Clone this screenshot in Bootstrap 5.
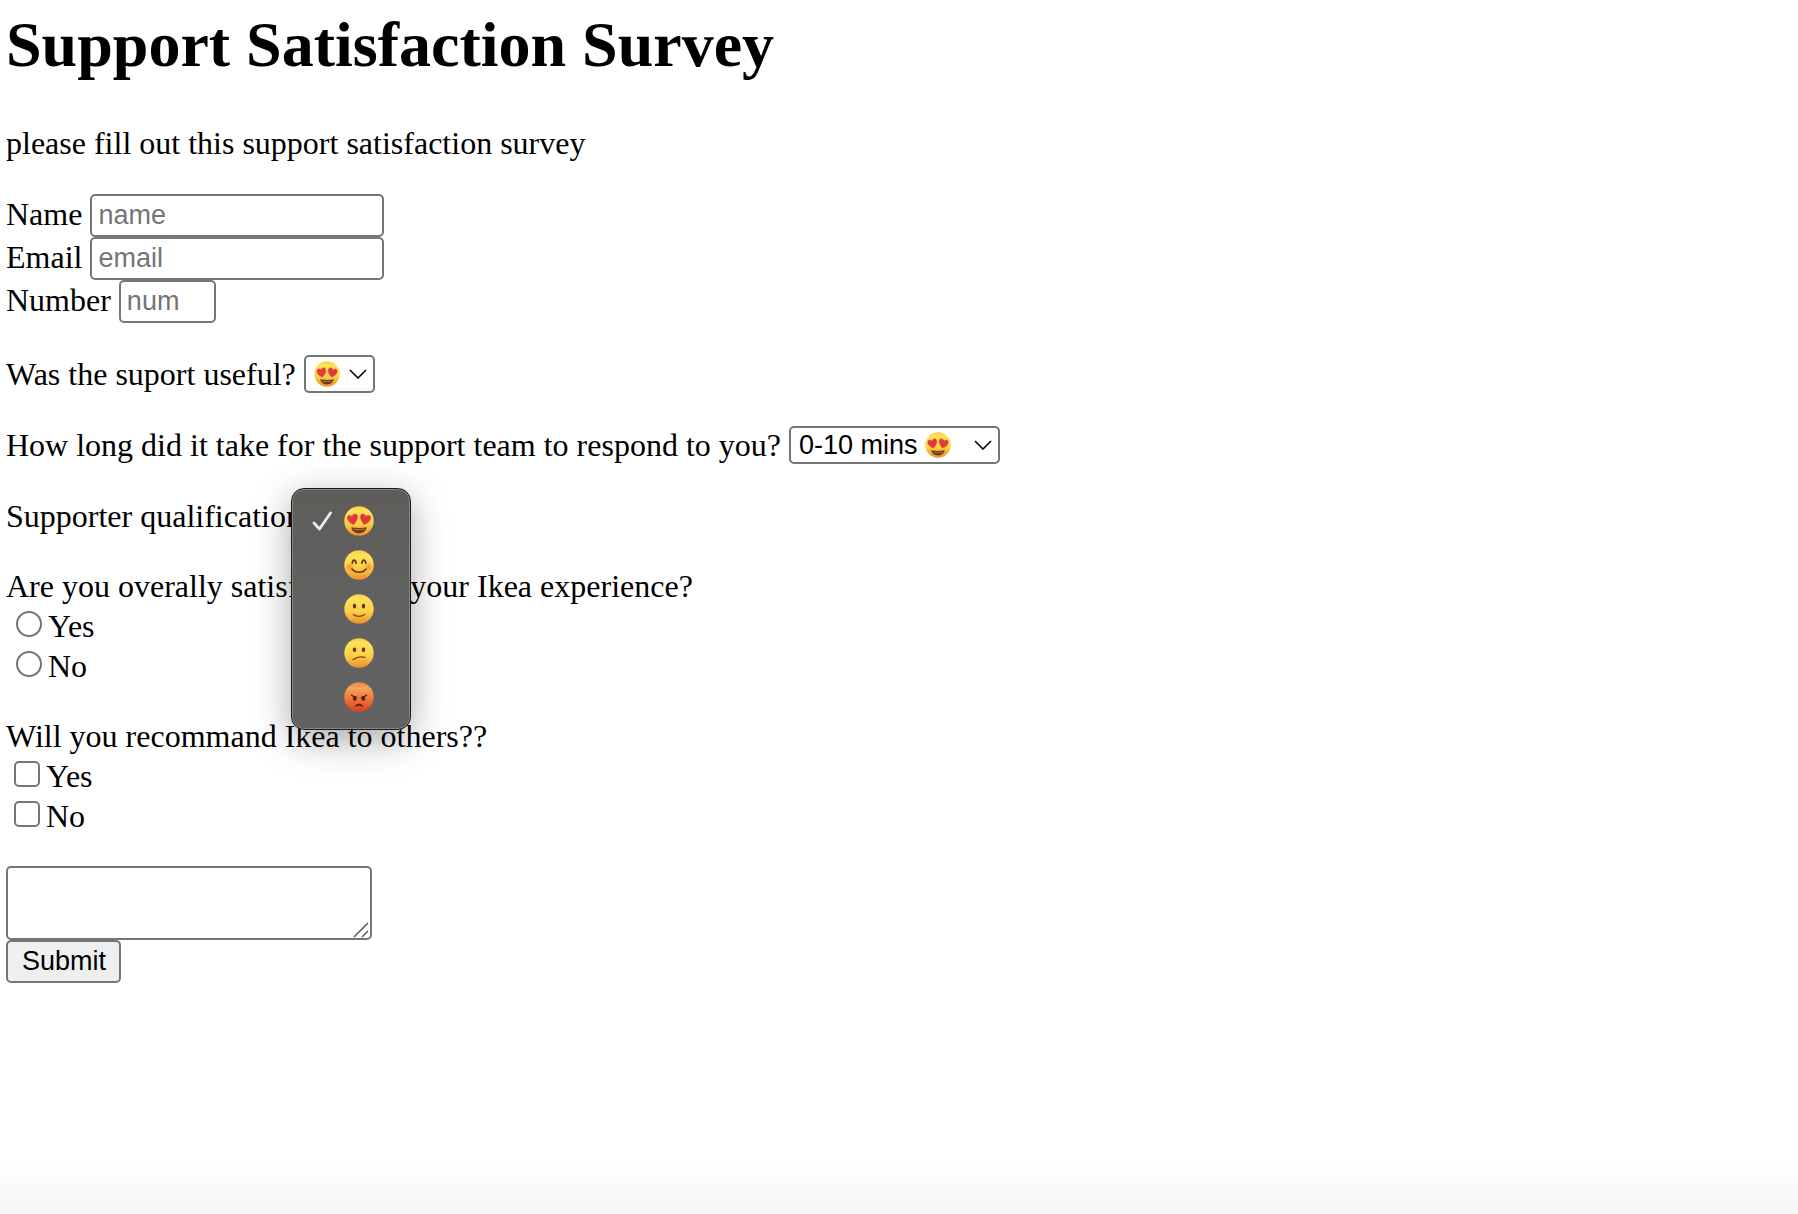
<!DOCTYPE html>
<html lang="en">
<head>
<meta charset="utf-8">
<meta name="viewport" content="width=device-width, initial-scale=1">
<title>Support Satisfaction Survey</title>
<link rel="stylesheet" href="https://cdn.jsdelivr.net/npm/bootstrap@5.3.0/dist/css/bootstrap.min.css">
<script src="https://cdn.jsdelivr.net/npm/bootstrap@5.3.0/dist/js/bootstrap.bundle.min.js"></script>
<style>
  body {
    font-family: "Liberation Serif", "Times New Roman", serif;
    font-size: 32px;
    line-height: 40px;
    color: #000;
    background: linear-gradient(to top, #f5f5f5, #fff 52px) no-repeat;
  }
  .survey { padding: 8px 6px; }
  .survey-title { font-size: 64px; line-height: 74px; font-weight: 700; margin-bottom: 41px; }
  .survey-intro { margin-bottom: 31px; }
  .survey-form { gap: 30px; }
  .entry { height: 43px; }
  .question { gap: 8px; min-height: 41px; }
  .question-title { font-size: 32px; line-height: 40px; float: none; margin: 0; }

  .field, .picker, .comment, .send {
    font-family: "Liberation Sans", Arial, sans-serif;
    font-size: 27px;
    border: 2px solid #767676;
    border-radius: 5px;
    background-color: #fff;
    color: #000;
  }
  .field { width: 294px; height: 43px; padding: 2px 6px; line-height: 35px; }
  .field-short { width: 97px; }
  .field::placeholder { color: #757575; opacity: 1; }
  .picker {
    appearance: none;
    height: 38px;
    width: 71px;
    padding: 0 8px;
    line-height: 34px;
    background: #fff url("data:image/svg+xml,%3Csvg xmlns='http://www.w3.org/2000/svg' viewBox='0 0 18 10'%3E%3Cpath d='M1 1l8 8 8-8' fill='none' stroke='%23000' stroke-width='1.6'/%3E%3C/svg%3E") no-repeat right 6px center / 18px 10px;
  }
  .picker-wide { width: 211px; }
  .picker-face { width: 26px; height: 26px; left: 10px; top: 6px; pointer-events: none; }
  .picker-wide + .picker-face { left: 136px; }

  .choice { height: 40px; }
  .tick {
    appearance: none;
    width: 26px;
    height: 26px;
    margin: 5px 6px 0 8px;
    border: 2px solid #767676;
    border-radius: 5px;
    background: #fff;
  }
  .tick[type="radio"] { border-radius: 50%; margin-left: 10px; }

  .comment { width: 366px; height: 74px; padding: 4px; resize: none; }
  .grip { width: 16px; height: 16px; right: 3px; bottom: 2px; pointer-events: none; }
  .send { height: 43px; padding: 0 13px 0 14px; line-height: 39px; background: #efefef; }

  .faces {
    top: -9px;
    left: -19px;
    width: 120px;
    height: 242px;
    padding: 10px 0;
    z-index: 5;
    border: 1px solid #1c1c1c;
    border-radius: 13px;
    background: linear-gradient(#5e5d5a, #626262 60%);
    box-shadow: inset 0 0 0 1px #858585, 0 10px 36px rgba(0, 0, 0, .34);
  }
  .faces li { height: 44px; padding-left: 20px; gap: 12px; }
  .faces svg { width: 30px; height: 30px; }
  .faces .check { width: 20px; height: 20px; }
</style>
</head>
<body class="min-vh-100">

<svg width="0" height="0" class="position-absolute" aria-hidden="true">
  <defs>
    <linearGradient id="gold" x1="0" y1="0" x2="0" y2="1">
      <stop offset="0" stop-color="#fbc93a"/><stop offset=".15" stop-color="#ffe25c"/><stop offset=".6" stop-color="#fdcf48"/><stop offset="1" stop-color="#e8912a"/>
    </linearGradient>
    <linearGradient id="rage" x1="0" y1="0" x2="0" y2="1">
      <stop offset="0" stop-color="#eb8440"/><stop offset=".2" stop-color="#f3a557"/><stop offset=".6" stop-color="#ee7038"/><stop offset="1" stop-color="#dc3f20"/>
    </linearGradient>
    <radialGradient id="blush"><stop offset="0" stop-color="#f77a30" stop-opacity=".75"/><stop offset="1" stop-color="#f77a30" stop-opacity="0"/></radialGradient>
  </defs>
  <symbol id="face-love" viewBox="0 0 30 30">
    <circle cx="15" cy="15" r="14.7" fill="url(#gold)"/>
    <path d="M9.600 18.600C6.500 17.400 3.300 15 3.200 11.600c0-2.500 3.200-3.400 4.700-.9 .5-2.900 4.300-3.900 5.400-1.300 1.200 3-1.300 6.800-3.700 9.200z" fill="#e5383c" stroke="#c9432b" stroke-width=".4"/>
    <path d="M20.400 18.600c3.100-1.200 6.300-3.600 6.400-7 0-2.500-3.200-3.400-4.700-.9-.5-2.900-4.300-3.900-5.400-1.300-1.200 3 1.300 6.800 3.700 9.200z" fill="#e5383c" stroke="#c9432b" stroke-width=".4"/>
    <path d="M7.300 21.200c4.800 1.100 10.600 1.100 15.400 0-.5 3.700-3.800 6-7.700 6s-7.200-2.300-7.700-6z" fill="#703a12"/>
    <path d="M9 22.400c4 .8 8 .8 12 0-.4 1.100-1.600 1.500-6 1.500s-5.600-.4-6-1.500z" fill="#b48247"/>
  </symbol>
  <symbol id="face-happy" viewBox="0 0 30 30">
    <circle cx="15" cy="15" r="14.7" fill="url(#gold)"/>
    <circle cx="5.500" cy="17" r="5" fill="url(#blush)"/><circle cx="24.500" cy="17" r="5" fill="url(#blush)"/>
    <g fill="none" stroke="#67350f" stroke-linecap="round">
      <path d="M8.300 13.200c.4-4 3.200-4 3.800 0M17.900 13.200c.5-4 3.300-4 3.800 0" stroke-width="1.700"/>
      <path d="M8 19c3.400 4.400 10.600 4.400 14 0" stroke-width="1.500"/>
    </g>
  </symbol>
  <symbol id="face-smile" viewBox="0 0 30 30">
    <circle cx="15" cy="15" r="14.700" fill="url(#gold)"/>
    <ellipse cx="10.500" cy="12" rx="1.700" ry="2.600" fill="#67350f"/><ellipse cx="19.500" cy="12" rx="1.700" ry="2.600" fill="#67350f"/>
    <path d="M9.200 20.300c3.200 2.800 8.400 2.800 11.600 0" fill="none" stroke="#7d4511" stroke-width="1.200" stroke-linecap="round"/>
  </symbol>
  <symbol id="face-unsure" viewBox="0 0 30 30">
    <circle cx="15" cy="15" r="14.700" fill="url(#gold)"/>
    <ellipse cx="10.500" cy="11.700" rx="1.800" ry="2.300" fill="#67350f"/><ellipse cx="19.500" cy="11.700" rx="1.800" ry="2.300" fill="#67350f"/>
    <path d="M9 21.700c3-2.500 7.600-3.400 12-2.300" fill="none" stroke="#7d4511" stroke-width="1.200" stroke-linecap="round"/>
  </symbol>
  <symbol id="face-angry" viewBox="0 0 30 30">
    <circle cx="15" cy="15" r="14.700" fill="url(#rage)"/>
    <ellipse cx="10.700" cy="16.600" rx="1.900" ry="2.400" fill="#591d0b"/><ellipse cx="19.300" cy="16.600" rx="1.900" ry="2.400" fill="#591d0b"/>
    <path d="M7.600 13.300c1.200 1.200 2.800 1.900 5 2.100M22.400 13.300c-1.200 1.200-2.800 1.900-5 2.100" fill="none" stroke="#591d0b" stroke-width="1.300" stroke-linecap="round"/>
    <path d="M11.200 24.200c1.400-2.600 6.200-2.600 7.600 0-2-1-5.600-1-7.600 0z" fill="#591d0b" stroke="#591d0b" stroke-width=".8"/>
  </symbol>
</svg>

<main class="survey">
  <h1 class="survey-title">Support Satisfaction Survey</h1>
  <p class="survey-intro">please fill out this support satisfaction survey</p>

  <form class="survey-form d-flex flex-column">
    <div>
      <div class="entry d-flex align-items-start gap-2">
        <label for="name">Name</label>
        <input class="field" id="name" type="text" placeholder="name">
      </div>
      <div class="entry d-flex align-items-start gap-2">
        <label for="email">Email</label>
        <input class="field" id="email" type="email" placeholder="email">
      </div>
      <div class="entry d-flex align-items-start gap-2">
        <label for="number">Number</label>
        <input class="field field-short" id="number" type="text" inputmode="numeric" placeholder="num">
      </div>
    </div>

    <div class="question d-flex align-items-center">
      <label for="useful">Was the suport useful?</label>
      <span class="position-relative d-flex">
        <select class="picker" id="useful"><option aria-label="Loved it"></option></select>
        <svg class="picker-face position-absolute"><use href="#face-love"/></svg>
      </span>
    </div>

    <div class="question d-flex align-items-center">
      <label for="wait">How long did it take for the support team to respond to you?</label>
      <span class="position-relative d-flex">
        <select class="picker picker-wide" id="wait"><option>0-10 mins</option></select>
        <svg class="picker-face position-absolute"><use href="#face-love"/></svg>
      </span>
    </div>

    <div class="question d-flex align-items-center">
      <label for="skill">Supporter qualification</label>
      <span class="position-relative d-flex">
        <select class="picker" id="skill"><option aria-label="Loved it"></option></select>
        <ul class="faces position-absolute list-unstyled m-0">
          <li class="d-flex align-items-center">
            <svg class="check" viewBox="0 0 20 20"><path d="M2 12l5.500 6L18.500 2" fill="none" stroke="#ececec" stroke-width="2.800" stroke-linecap="round" stroke-linejoin="round"/></svg>
            <svg><use href="#face-love"/></svg>
          </li>
          <li class="d-flex align-items-center"><span class="check"></span><svg><use href="#face-happy"/></svg></li>
          <li class="d-flex align-items-center"><span class="check"></span><svg><use href="#face-smile"/></svg></li>
          <li class="d-flex align-items-center"><span class="check"></span><svg><use href="#face-unsure"/></svg></li>
          <li class="d-flex align-items-center"><span class="check"></span><svg><use href="#face-angry"/></svg></li>
        </ul>
      </span>
    </div>

    <fieldset>
      <legend class="question-title">Are you overally satisfied with your Ikea experience?</legend>
      <div class="choice d-flex align-items-start">
        <input class="tick" type="radio" name="satisfied" id="satisfied-yes"><label for="satisfied-yes">Yes</label>
      </div>
      <div class="choice d-flex align-items-start">
        <input class="tick" type="radio" name="satisfied" id="satisfied-no"><label for="satisfied-no">No</label>
      </div>
    </fieldset>

    <fieldset>
      <legend class="question-title">Will you recommand Ikea to others??</legend>
      <div class="choice d-flex align-items-start">
        <input class="tick" type="checkbox" id="recommend-yes"><label for="recommend-yes">Yes</label>
      </div>
      <div class="choice d-flex align-items-start">
        <input class="tick" type="checkbox" id="recommend-no"><label for="recommend-no">No</label>
      </div>
    </fieldset>

    <div class="d-flex flex-column align-items-start">
      <div class="position-relative d-flex">
        <textarea class="comment" aria-label="Comments"></textarea>
        <svg class="grip position-absolute" viewBox="0 0 16 16"><path d="M1 15L15 1M9 15l6-6" stroke="#555" stroke-width="1.500"/></svg>
      </div>
      <button class="send" type="submit">Submit</button>
    </div>
  </form>
</main>
</body>
</html>
